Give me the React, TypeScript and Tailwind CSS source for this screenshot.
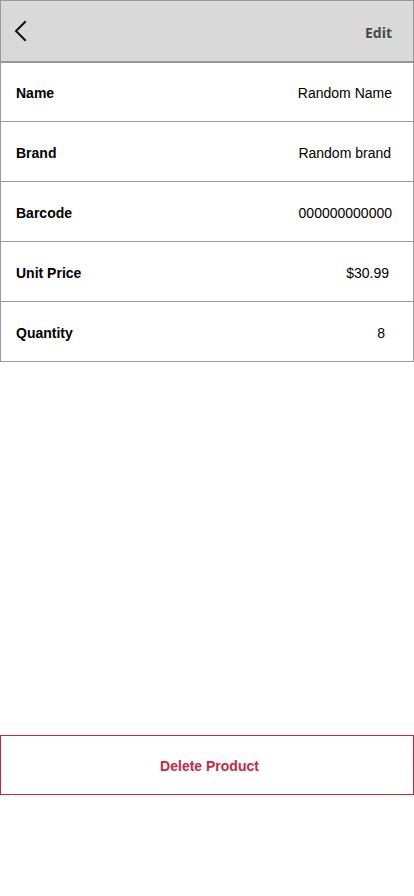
import { ReactNode } from "react";

const rows = [
  { label: "Name", value: "Random Name", pr: "pr-[21px]" },
  { label: "Brand", value: "Random brand", pr: "pr-[22px]" },
  { label: "Barcode", value: "000000000000", pr: "pr-[21px]" },
  { label: "Unit Price", value: "$30.99", pr: "pr-[24px]" },
  { label: "Quantity", value: "8", pr: "pr-[28px]" },
];

function Row({ label, value, pr, first }: { label: string; value: ReactNode; pr: string; first?: boolean }) {
  return (
    <div
      className={`flex items-center justify-between h-[60px] pl-[15px] ${pr} pt-[3px] border-x border-b border-[#999999] bg-white ${
        first ? "border-t" : ""
      }`}
    >
      <span className="text-[14px] font-bold text-black">{label}</span>
      <span className="text-[14px] text-black">{value}</span>
    </div>
  );
}

export default function App() {
  return (
    <div className="w-[414px] h-[896px] bg-white flex flex-col" style={{ fontFamily: '"Liberation Sans", Arial, sans-serif' }}>
      <div className="h-[62px] shrink-0 bg-[#d9d9d9] border border-[#999999] flex items-center justify-between pl-[13px] pr-[21px] pt-[3px]">
        <svg width="14" height="22" viewBox="0 0 14 22" fill="none" className="-mt-[3px]">
          <path d="M11 2 L2 11 L11 20" stroke="#111" strokeWidth="2" strokeLinecap="square" />
        </svg>
        <span className="text-[14px] font-bold text-[#4a4a4a]" style={{ fontFamily: '"Open Sans", sans-serif' }}>
          Edit
        </span>
      </div>

      <div>
        {rows.map((r, i) => (
          <Row key={r.label} label={r.label} value={r.value} pr={r.pr} first={i === 0} />
        ))}
      </div>

      <div className="mt-[373px] h-[60px] border border-[#d0253f] flex items-center justify-center pl-[5px] pt-[2px]">
        <span className="text-[14px] font-bold text-[#c9283f]">Delete Product</span>
      </div>
    </div>
  );
}
